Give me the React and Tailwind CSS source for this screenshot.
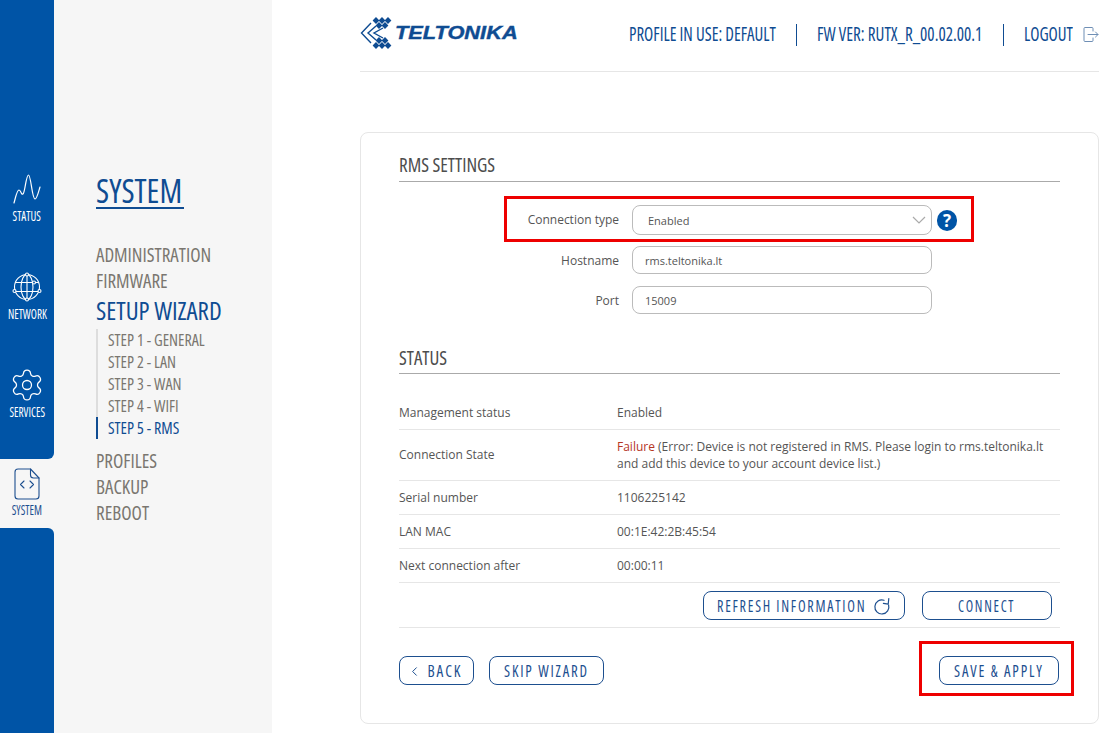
import React from 'react';
import { ChevronLeft, Settings } from 'lucide-react';

const statusRows = [
  { label: 'Management status', value: 'Enabled', h: 'h-[34px]' },
  { label: 'Connection State', h: 'h-[51px]', failure: true },
  { label: 'Serial number', value: '1106225142', h: 'h-[34px]' },
  { label: 'LAN MAC', value: '00:1E:42:2B:45:54', h: 'h-[34px]' },
  { label: 'Next connection after', value: '00:00:11', h: 'h-[34px]' },
];

// Oswald isn't available, condensed Open Sans is the nearest thing
function Narrow({ className = '', children }) {
  return (
    <span className={`block whitespace-nowrap origin-left font-stretch-condensed ${className}`}>{children}</span>
  );
}

function StatusIcon() {
  return (
    <svg width="30" height="30" viewBox="0 0 30 30" fill="none" stroke="white" strokeWidth="1.2" strokeLinecap="round" strokeLinejoin="round">
      <path d="M2 29 C4 22 5 16 7 16 C9 16 9 21 11 20 C13 19 14 1 16.5 1 C19 1 20 25 23 25 C25 25 27 16 28 13" />
    </svg>
  );
}

function GlobeIcon() {
  return (
    <svg width="30" height="30" viewBox="0 0 30 30" fill="none" stroke="white" strokeWidth="1.1">
      <circle cx="15" cy="15" r="12.5" />
      <ellipse cx="15" cy="15" rx="6" ry="12.5" />
      <path d="M15 2.5V27.5M3.5 10.5H26.5M3.5 19.5H26.5" />
      <circle cx="15" cy="2.5" r="1.5" fill="#0054a6" />
      <circle cx="2.5" cy="19" r="1.5" fill="#0054a6" />
      <circle cx="27.5" cy="19" r="1.5" fill="#0054a6" />
      <circle cx="22" cy="10.5" r="1.5" fill="#0054a6" />
      <circle cx="15" cy="27.5" r="1.5" fill="#0054a6" />
    </svg>
  );
}

function SystemIcon() {
  return (
    <svg width="26" height="32" viewBox="0 0 26 32" fill="none" stroke="#1d4f8f" strokeWidth="1.1" strokeLinejoin="round" strokeLinecap="round">
      <path d="M4 1H16.5L25 10V28A3 3 0 0 1 22 31H4A3 3 0 0 1 1 28V4A3 3 0 0 1 4 1Z" />
      <path d="M16.5 1V7A3 3 0 0 0 19.5 10H25" />
      <path d="M10 13L6.5 16.5L10 20M16 13L19.5 16.5L16 20" />
    </svg>
  );
}

function LogoutIcon() {
  return (
    <svg width="16" height="15" viewBox="0 0 16 15" fill="none" stroke="#6f8fb5" strokeWidth="1" strokeLinecap="round" strokeLinejoin="round">
      <path d="M10 4V1.5A1 1 0 0 0 9 .5H2A1 1 0 0 0 1 1.5V13.5A1 1 0 0 0 2 14.5H9A1 1 0 0 0 10 13.5V11" />
      <path d="M5 7.5H15M12.5 5L15 7.5L12.5 10" />
    </svg>
  );
}

function RefreshIcon() {
  return (
    <svg width="18" height="18" viewBox="0 0 18 18" fill="none" stroke="#1d4f8f" strokeWidth="1.2" strokeLinecap="round" strokeLinejoin="round">
      <path d="M11 3.3A7 7 0 1 0 15.6 8" />
      <path d="M15.8 1.5L15.2 7.2L10.4 6.4" />
    </svg>
  );
}

function Logo() {
  const dots = [
    [16, 3.5], [22, 3.5], [28, 3.5], [19, 8.5], [25, 8.5],
    [16, 28.5], [22, 28.5], [28, 28.5], [19, 23.5], [25, 23.5],
  ];
  return (
    <div className="flex items-center w-[157px] -mt-[2px]">
      <svg width="37" height="32" viewBox="0 0 37 32" className="shrink-0">
        {dots.map(([x, y]) => (
          <path key={`${x}-${y}`} d={`M${x} ${y - 3.4}L${x + 3.4} ${y}L${x} ${y + 3.4}L${x - 3.4} ${y}Z`} fill="#0f4c92" />
        ))}
        <path d="M11 6L1.5 16L11 26M16 9L8 16L16 23M23 11L14 16L23 21" fill="none" stroke="#0f4c92" strokeWidth="1.4" />
      </svg>
      <span className="-ml-[2px] mt-[1px] block origin-left scale-x-[1.21] whitespace-nowrap text-[18px] leading-none font-bold italic text-[#0f4c92] [-webkit-text-stroke:0.4px_#0f4c92] font-['Liberation_Sans',sans-serif]">TELTONIKA</span>
    </div>
  );
}

function SideItem({ label, icon, active }) {
  return (
    <div className={`flex flex-col items-center ${active ? 'h-[69px] pt-[9px] bg-[#f6f6f6]' : 'h-[98px]'}`}>
      <div className="h-[32px] flex items-center justify-center">{icon}</div>
      <span className={`block whitespace-nowrap scale-x-[0.8] font-medium font-stretch-condensed text-[14px] leading-[16px] ${active ? 'mt-[2px] text-[#1d4f8f]' : 'mt-[3px] text-white'}`}>{label}</span>
    </div>
  );
}

function OutlineButton({ className, children }) {
  return (
    <button className={`h-[29px] flex items-center justify-center gap-[7px] pt-px border border-[#1d4f8f] rounded-[8px] text-[#1d4f8f] text-[16px] font-medium tracking-[2px] bg-white ${className}`}>
      {children}
    </button>
  );
}

function FormRow({ label, boxClass, labelClass = '', children }) {
  return (
    <div className={`flex items-center ${boxClass}`}>
      <label className={`w-[233px] pr-[13px] text-right text-[12px] text-[#555] ${labelClass}`}>{label}</label>
      {children}
    </div>
  );
}

export default function App() {
  return (
    <div className="flex w-[1112px] h-[733px] overflow-hidden bg-white font-['Open_Sans',sans-serif]">

      {/* Icon rail */}
      <div className="w-[54px] shrink-0 flex flex-col bg-[#f6f6f6]">
        <div className="h-[459px] pt-[173px] bg-[#0054a6] rounded-br-[6px]">
          <SideItem label="STATUS" icon={<StatusIcon />} />
          <SideItem label="NETWORK" icon={<GlobeIcon />} />
          <SideItem label="SERVICES" icon={<Settings size={36} color="white" strokeWidth={0.85} />} />
        </div>
        <SideItem label="SYSTEM" icon={<SystemIcon />} active />
        <div className="flex-1 bg-[#0054a6] rounded-tr-[6px]" />
      </div>

      {/* Section menu */}
      <div className="w-[218px] shrink-0 bg-[#f6f6f6] pl-[42px] pt-[174px]">
        <h1 className="w-[88px] text-[32px] leading-[33px] text-[#0f4c92] border-b-2 border-[#0f4c92]"><Narrow>SYSTEM</Narrow></h1>
        <nav className="mt-[33px] flex flex-col text-[19px] leading-[26px] text-[#7a7670]">
          <a><Narrow>ADMINISTRATION</Narrow></a>
          <a><Narrow>FIRMWARE</Narrow></a>
          <a className="text-[25px] leading-[33px] text-[#0f4c92]"><Narrow>SETUP WIZARD</Narrow></a>
          <div className="mt-[2px] mb-[9px] flex flex-col text-[16px] leading-[22px]">
            <a className="pl-[10px] border-l-2 border-[#dddddd]"><Narrow>STEP 1 - GENERAL</Narrow></a>
            <a className="pl-[10px] border-l-2 border-[#dddddd]"><Narrow>STEP 2 - LAN</Narrow></a>
            <a className="pl-[10px] border-l-2 border-[#dddddd]"><Narrow>STEP 3 - WAN</Narrow></a>
            <a className="pl-[10px] border-l-2 border-[#dddddd]"><Narrow>STEP 4 - WIFI</Narrow></a>
            <a className="pl-[10px] border-l-2 border-[#0f4c92] text-[#0f4c92]"><Narrow>STEP 5 - RMS</Narrow></a>
          </div>
          <a><Narrow>PROFILES</Narrow></a>
          <a><Narrow>BACKUP</Narrow></a>
          <a><Narrow>REBOOT</Narrow></a>
        </nav>
      </div>

      {/* Main column */}
      <div className="w-[739px] ml-[88px] shrink-0">

        {/* Top bar */}
        <header className="h-[72px] flex items-center justify-between border-b border-[#e6e6e6] pb-[4px]">
          <Logo />
          <div className="flex items-center pt-[2px] text-[19px] text-[#0f4c92]">
            <div className="w-[147px]"><Narrow className="scale-x-[0.89]">PROFILE IN USE: DEFAULT</Narrow></div>
            <span className="w-px h-[22px] bg-[#0f4c92] mx-[20px]" />
            <div className="w-[166px]"><Narrow className="scale-x-[0.9]">FW VER: RUTX_R_00.02.00.1</Narrow></div>
            <span className="w-px h-[22px] bg-[#0f4c92] mx-[20px]" />
            <div className="w-[48px]"><Narrow className="scale-x-[0.89]">LOGOUT</Narrow></div>
            <span className="ml-[11px]"><LogoutIcon /></span>
          </div>
        </header>

        {/* Card */}
        <div className="relative mt-[60px] h-[592px] px-[38px] pt-[20px] border border-[#e6e6e6] rounded-[8px]">
          <h2 className="h-[29px] border-b border-[#aaaaaa] text-[19px] leading-[24px] text-[#4d4d4d]"><Narrow>RMS SETTINGS</Narrow></h2>

          <div className="mt-[23px] flex flex-col">
            <FormRow label="Connection type" boxClass="h-[30px] mb-[11px]">
              <div className="w-[300px] h-[30px] flex items-center justify-between pl-[15px] pr-[5px] border border-[#bbbbbb] rounded-[8px] text-[11px] text-[#555]">
                <span className="pt-[2px]">Enabled</span>
                <svg width="14" height="8" viewBox="0 0 14 8" fill="none" stroke="#aaaaaa" strokeWidth="1.2"><path d="M1 1L7 7L13 1" /></svg>
              </div>
              <span className="ml-[5px] w-[20px] h-[21px] flex items-center justify-center rounded-full bg-[#0054a6] text-white text-[17px] leading-none font-bold">?</span>
            </FormRow>
            <FormRow label="Hostname" boxClass="h-[28px] mb-[12px]" labelClass="pt-[2px]">
              <div className="w-[300px] h-[28px] flex items-center pt-[2px] pl-[12px] border border-[#bbbbbb] rounded-[8px] text-[11px] text-[#555]">rms.teltonika.lt</div>
            </FormRow>
            <FormRow label="Port" boxClass="h-[28px]" labelClass="pt-[2px]">
              <div className="w-[300px] h-[28px] flex items-center pt-[2px] pl-[12px] border border-[#bbbbbb] rounded-[8px] text-[11px] text-[#555]">15009</div>
            </FormRow>
          </div>

          <h2 className="mt-[30px] h-[30px] border-b border-[#aaaaaa] text-[19px] leading-[28px] text-[#4d4d4d]"><Narrow>STATUS</Narrow></h2>

          <div className="mt-[22px] flex flex-col text-[12px] text-[#555]">
            {statusRows.map((r) => (
              <div key={r.label} className={`flex items-center border-b border-[#e6e6e6] ${r.h}`}>
                <span className="w-[218px] shrink-0">{r.label}</span>
                {r.failure ? (
                  <span className="leading-[17px]">
                    <span className="text-[#b5351f]">Failure</span> (Error: Device is not registered in RMS. Please login to rms.teltonika.lt<br />and add this device to your account device list.)
                  </span>
                ) : (
                  <span>{r.value}</span>
                )}
              </div>
            ))}
            <div className="h-[45px] flex items-center justify-end gap-[17px] pr-[8px] border-b border-[#e6e6e6]">
              <OutlineButton className="w-[202px]">
                <div className="w-[149px]"><Narrow className="scale-x-[0.88]">REFRESH INFORMATION</Narrow></div>
                <RefreshIcon />
              </OutlineButton>
              <OutlineButton className="w-[130px]"><div className="w-[58px]"><Narrow className="scale-x-[0.85]">CONNECT</Narrow></div></OutlineButton>
            </div>
          </div>

          <div className="mt-[28px] flex items-center">
            <OutlineButton className="w-[75px]"><ChevronLeft size={15} strokeWidth={1.6} /><div className="w-[40px] -ml-[3px]"><Narrow className="scale-x-[0.95]">BACK</Narrow></div></OutlineButton>
            <OutlineButton className="w-[115px] ml-[15px]"><div className="w-[85px]"><Narrow className="scale-x-[0.92]">SKIP WIZARD</Narrow></div></OutlineButton>
            <OutlineButton className="w-[120px] ml-auto mr-px"><div className="w-[90px]"><Narrow className="scale-x-[0.92]">SAVE &amp; APPLY</Narrow></div></OutlineButton>
          </div>

          {/* Screenshot annotations */}
          <div className="absolute left-[143px] top-[63px] w-[470px] h-[46px] border-[3px] border-[#ee0000]" />
          <div className="absolute left-[558px] top-[508px] w-[155px] h-[55px] border-[3px] border-[#ee0000]" />
        </div>
      </div>
    </div>
  );
}
